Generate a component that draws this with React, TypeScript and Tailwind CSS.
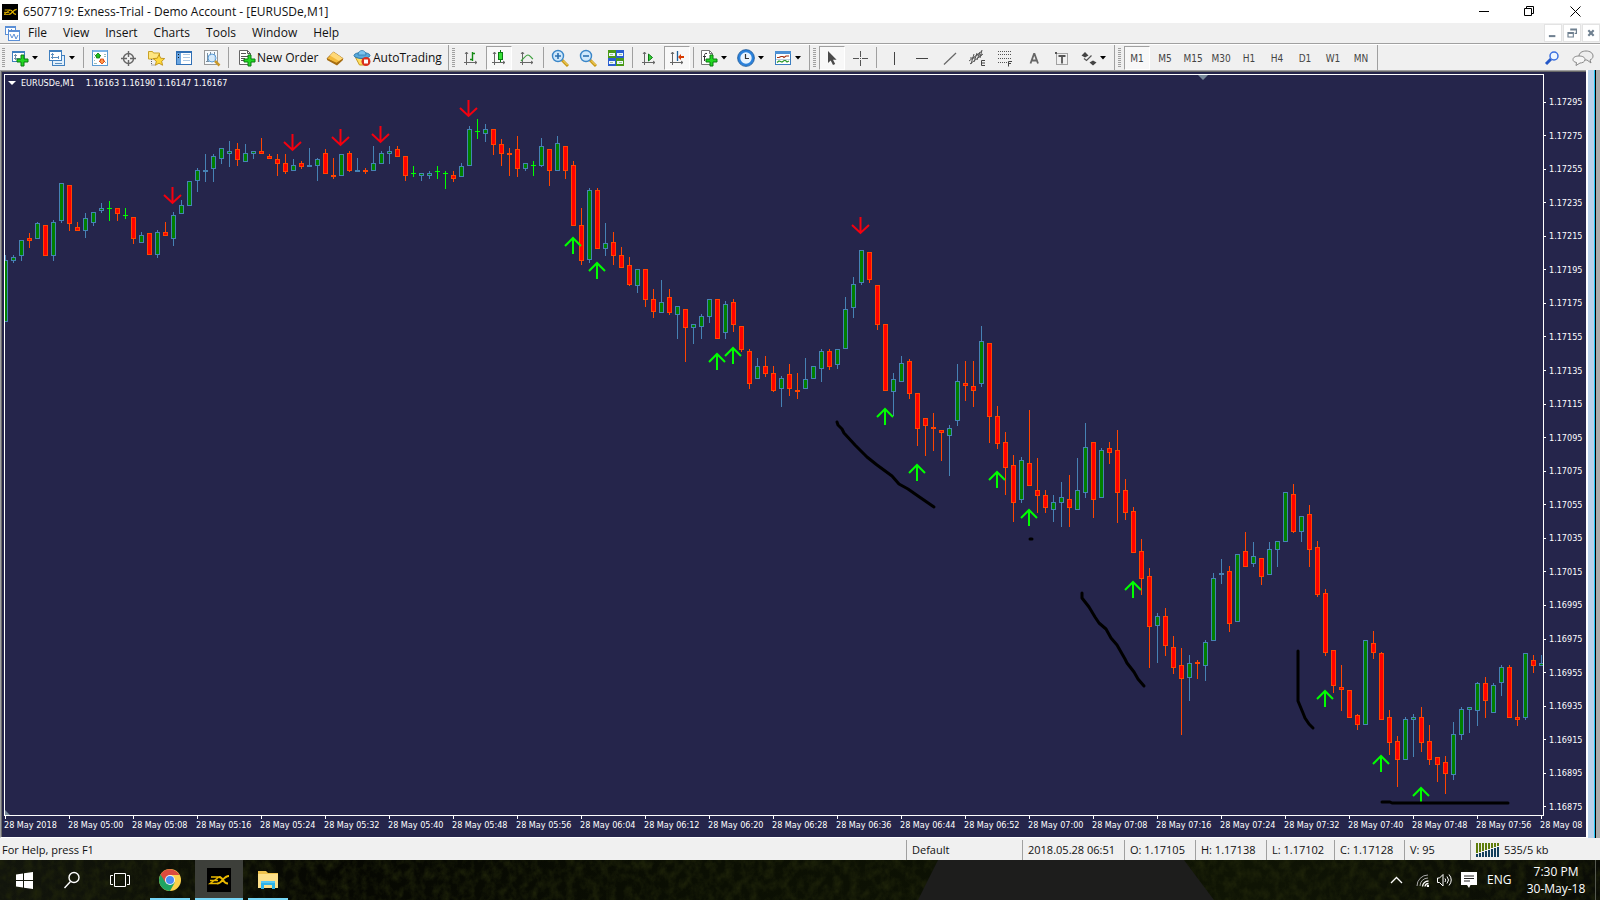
import React, { useState } from "react";
import clsx from "clsx";

type Kind = "u" | "d" | "x";
// kind, high, body top, body bottom, low
type Candle = [Kind, number, number, number, number];

const candles: Candle[] = [
  ["u", 255, 260, 322, 322], ["u", 255, 257, 261, 263], ["u", 240, 240, 256, 261], ["d", 233, 238, 241, 248],
  ["u", 222, 223, 239, 239], ["d", 225, 225, 256, 256], ["u", 220, 222, 256, 261], ["u", 183, 183, 221, 223],
  ["d", 185, 185, 224, 231], ["d", 222, 227, 231, 231], ["u", 213, 218, 231, 238], ["u", 212, 212, 223, 226],
  ["u", 203, 208, 211, 213], ["x", 201, 208, 209, 221], ["d", 208, 208, 214, 221], ["x", 208, 215, 216, 219],
  ["d", 217, 217, 239, 244], ["u", 232, 235, 243, 243], ["d", 233, 233, 255, 255], ["u", 230, 232, 255, 258],
  ["d", 222, 232, 236, 236], ["u", 212, 215, 239, 246], ["u", 200, 205, 214, 214], ["u", 181, 181, 206, 206],
  ["u", 168, 170, 181, 192], ["u", 154, 170, 172, 182], ["u", 154, 156, 169, 182], ["u", 148, 148, 159, 164],
  ["u", 141, 151, 154, 167], ["d", 143, 149, 160, 166], ["u", 144, 153, 162, 162], ["u", 151, 151, 154, 159],
  ["d", 138, 151, 154, 154], ["d", 154, 156, 159, 159], ["d", 154, 159, 164, 176], ["d", 154, 163, 172, 174],
  ["u", 159, 165, 171, 171], ["d", 161, 163, 167, 169], ["u", 148, 165, 167, 167], ["u", 158, 159, 166, 181],
  ["d", 149, 153, 174, 174], ["d", 158, 175, 177, 179], ["u", 154, 154, 176, 176], ["d", 151, 153, 171, 172],
  ["u", 158, 170, 172, 172], ["d", 168, 170, 172, 174], ["u", 146, 163, 171, 171], ["u", 151, 153, 164, 164],
  ["u", 146, 151, 154, 164], ["d", 146, 149, 157, 157], ["d", 156, 156, 176, 181], ["x", 166, 173, 174, 177],
  ["u", 173, 173, 176, 181], ["u", 171, 173, 176, 179], ["x", 166, 171, 172, 179], ["x", 171, 173, 174, 189],
  ["d", 171, 175, 179, 182], ["u", 163, 166, 177, 177], ["u", 126, 129, 166, 166], ["x", 119, 131, 132, 139],
  ["u", 124, 129, 134, 142], ["d", 129, 129, 145, 155], ["d", 139, 144, 154, 166], ["d", 148, 153, 155, 176],
  ["d", 136, 149, 169, 177], ["u", 163, 163, 169, 171], ["x", 161, 165, 166, 176], ["u", 138, 146, 166, 167],
  ["d", 149, 149, 171, 186], ["u", 136, 143, 171, 171], ["d", 146, 146, 171, 179], ["d", 161, 165, 226, 226],
  ["d", 208, 225, 261, 265], ["u", 188, 190, 260, 263], ["d", 188, 190, 249, 249], ["u", 223, 243, 249, 256],
  ["d", 232, 242, 256, 265], ["d", 247, 255, 268, 268], ["d", 257, 265, 285, 286], ["u", 269, 269, 286, 293],
  ["d", 269, 269, 300, 307], ["d", 289, 299, 312, 318], ["u", 280, 302, 313, 313], ["d", 289, 297, 313, 315],
  ["u", 306, 306, 315, 339], ["d", 309, 309, 328, 362], ["u", 324, 324, 328, 344], ["u", 314, 316, 327, 339],
  ["u", 299, 299, 317, 323], ["d", 299, 299, 339, 339], ["u", 301, 304, 333, 339], ["d", 299, 302, 325, 332],
  ["d", 326, 326, 350, 352], ["d", 349, 351, 384, 389], ["u", 358, 366, 379, 379], ["d", 356, 366, 374, 377],
  ["d", 366, 373, 391, 392], ["u", 376, 378, 389, 407], ["d", 364, 374, 389, 396], ["d", 373, 390, 392, 399],
  ["u", 358, 379, 389, 389], ["u", 366, 366, 379, 379], ["u", 349, 351, 369, 382], ["d", 349, 351, 367, 370],
  ["u", 349, 349, 365, 369], ["u", 297, 309, 349, 349], ["u", 277, 284, 308, 318], ["u", 250, 250, 283, 285],
  ["d", 252, 252, 280, 283], ["d", 285, 285, 325, 330], ["d", 324, 324, 391, 391], ["u", 373, 379, 392, 416],
  ["u", 356, 363, 382, 382], ["d", 359, 361, 394, 399], ["d", 393, 393, 429, 446], ["d", 418, 418, 426, 456],
  ["d", 413, 427, 429, 451], ["d", 430, 430, 433, 461], ["u", 425, 428, 436, 476], ["u", 364, 381, 421, 426],
  ["d", 361, 383, 386, 401], ["d", 361, 386, 391, 407], ["u", 326, 341, 384, 387], ["d", 343, 343, 417, 443],
  ["d", 406, 416, 444, 449], ["d", 432, 442, 468, 495], ["d", 455, 465, 503, 522], ["u", 457, 460, 500, 503],
  ["d", 410, 463, 486, 486], ["d", 458, 490, 496, 513], ["d", 490, 495, 508, 513], ["u", 495, 502, 510, 522],
  ["u", 482, 497, 503, 527], ["d", 475, 499, 508, 527], ["u", 458, 490, 510, 510], ["u", 423, 447, 493, 498],
  ["d", 442, 442, 500, 518], ["u", 448, 450, 498, 498], ["d", 442, 448, 453, 464], ["d", 430, 450, 493, 523],
  ["d", 479, 490, 513, 520], ["d", 507, 511, 553, 553], ["d", 539, 551, 579, 595], ["d", 568, 576, 627, 668],
  ["u", 613, 616, 626, 663], ["d", 608, 616, 646, 656], ["d", 636, 647, 668, 674], ["d", 648, 665, 679, 735],
  ["u", 655, 663, 678, 701], ["d", 660, 662, 664, 679], ["u", 640, 642, 666, 681], ["u", 573, 578, 641, 641],
  ["u", 559, 573, 575, 584], ["d", 566, 571, 624, 632], ["u", 554, 554, 622, 622], ["d", 532, 551, 567, 567],
  ["u", 542, 556, 564, 567], ["d", 558, 558, 577, 585], ["u", 542, 549, 575, 575], ["u", 541, 541, 550, 567],
  ["u", 492, 492, 542, 542], ["d", 484, 494, 532, 533], ["u", 516, 516, 532, 542], ["d", 505, 514, 550, 567],
  ["d", 541, 547, 595, 597], ["d", 589, 593, 653, 656], ["d", 650, 650, 686, 693], ["d", 665, 687, 690, 711],
  ["d", 690, 690, 718, 718], ["d", 714, 715, 725, 730], ["u", 640, 640, 725, 725], ["d", 631, 643, 653, 659],
  ["d", 652, 653, 720, 720], ["d", 710, 717, 743, 755], ["d", 736, 741, 760, 787], ["u", 717, 719, 760, 760],
  ["u", 714, 717, 720, 757], ["d", 707, 717, 743, 752], ["d", 725, 741, 760, 765], ["d", 757, 757, 765, 782],
  ["d", 756, 762, 774, 794], ["u", 722, 734, 775, 780], ["u", 707, 709, 735, 740], ["u", 707, 707, 710, 733],
  ["u", 682, 683, 711, 726], ["d", 677, 683, 701, 718], ["u", 683, 685, 713, 713], ["u", 665, 667, 683, 696],
  ["d", 665, 667, 718, 718], ["d", 700, 717, 720, 726], ["u", 653, 653, 718, 720], ["d", 655, 660, 666, 673],
  ["u", 655, 663, 666, 666],
];

const colors = {
  u: { line: "#4682b4", fill: "#008000" },
  d: { line: "#ff4500", fill: "#ff0000" },
  x: { line: "#00ff00", fill: "#00ff00" },
};

const sellArrows = [[172, 187], [292, 134], [340, 129], [380, 126], [468, 100], [860, 217]];
const buyArrows = [
  [573, 237], [597, 262], [717, 353], [733, 347], [885, 408], [917, 464], [997, 471],
  [1029, 509], [1133, 581], [1325, 690], [1381, 755], [1421, 787],
];

const strokes = [
  "837,422 838,425 842,429 844,433 855,445 867,457 877,465 892,476 899,484 908,489 918,496 934,507",
  "1030,539 1032,539",
  "1082,593 1082,598 1089,607 1095,617 1099,623 1106,629 1111,638 1117,645 1125,659 1127,663 1134,672 1138,679 1144,686",
  "1298,651 1298,668 1298,671 1298,701 1303,713 1305,718 1309,724 1313,728",
  "1382,802 1390,802 1392,803 1508,803",
];

const prices = Array.from({ length: 22 }, (_, i) => ((117295 - i * 20) / 100000).toFixed(5));

const times = [
  "2018", "05:00", "05:08", "05:16", "05:24", "05:32", "05:40", "05:48", "05:56", "06:04", "06:12", "06:20", "06:28",
  "06:36", "06:44", "06:52", "07:00", "07:08", "07:16", "07:24", "07:32", "07:40", "07:48", "07:56", "08",
];

const periods = ["M1", "M5", "M15", "M30", "H1", "H4", "D1", "W1", "MN"];

const quote = [
  { text: "Default", width: "w-[116px]" },
  { text: "2018.05.28 06:51", width: "w-[102px]" },
  { text: "O: 1.17105", width: "w-[71px]" },
  { text: "H: 1.17138", width: "w-[71px]" },
  { text: "L: 1.17102", width: "w-[68px]" },
  { text: "C: 1.17128", width: "w-[70px]" },
  { text: "V: 95", width: "w-[66px]" },
];

function Icon({ children, size = 18 }: { children: React.ReactNode; size?: number }) {
  return (
    <svg width={size} height={size} viewBox="0 0 18 18" fill="none" className="shrink-0" aria-hidden="true">
      {children}
    </svg>
  );
}

function Plus({ x, y }: { x: number; y: number }) {
  return (
    <path
      d={`M${x + 4} ${y}h3v4h4v3h-4v4h-3v-4h-4v-3h4z`}
      fill="#22d822"
      stroke="#0a7a12"
      strokeWidth="1"
    />
  );
}

function Axes() {
  return (
    <path d="M4.500 3v13M2 13.500h13M3 5l1.500-2L6 5M13 12l2 1.500L13 15" stroke="#666" strokeWidth="1" />
  );
}

const icons = {
  newChart: (
    <Icon>
      <rect x="1.500" y="2.500" width="12" height="10" fill="#fff" stroke="#3f7fbf" />
      <path d="M1 3h13" stroke="#3f7fbf" strokeWidth="2" />
      <path d="M4.500 5v6M3 9.500h6M3 6.500h3" stroke="#6f8fa8" />
      <Plus x={6} y={6} />
    </Icon>
  ),
  profiles: (
    <Icon>
      <rect x="4.500" y="6.500" width="12" height="10" fill="#e3f0fb" stroke="#3f7fbf" />
      <path d="M7 14.500h7" stroke="#5c8fc0" />
      <rect x="1.500" y="1.500" width="12" height="10" fill="#fff" stroke="#3f7fbf" />
      <path d="M1 2h13" stroke="#3f7fbf" strokeWidth="2" />
      <path d="M4.500 4v6M3 5.500h3M3 8.500h8M10.500 7v3" stroke="#5c8fc0" />
    </Icon>
  ),
  market: (
    <Icon>
      <rect x="1.500" y="1.500" width="15" height="15" fill="#fff" stroke="#5b9bd5" />
      <path d="M2 2h14" stroke="#7db4e6" strokeWidth="2" />
      <path d="M3 5.500h1M3 8.500h1M3 11.500h1M3 14.500h3M13 5.500h2M13 7.500h2M14 13.500h1" stroke="#9bb" />
      <path d="M7 4l3 3H8.500v2h-3V7H4z" fill="#1fc01f" stroke="#0b7a0b" strokeWidth=".8" />
      <path d="M11 15l-3-3h1.500v-2h3v2H14z" fill="#ff9a4a" stroke="#d63a00" strokeWidth=".8" />
    </Icon>
  ),
  crosshair: (
    <Icon>
      <circle cx="9.500" cy="9.500" r="5" stroke="#666" strokeWidth="1.400" />
      <path d="M9.500 2v6M9.500 11v6M2 9.500h6M11 9.500h6" stroke="#666" strokeWidth="1.400" />
    </Icon>
  ),
  navigator: (
    <Icon>
      <path d="M1.500 2.500h4l1 1.500h6v6h-11z" fill="#ffe680" stroke="#c9a227" />
      <path d="M4.500 10v6h4" stroke="#666" strokeDasharray="1 1" />
      <path d="M12 5.500l1.700 3.700 4 .4-3 2.700.9 4-3.600-2.100-3.600 2.100.9-4-3-2.700 4-.4z" fill="#ffd93b" stroke="#b8860b" strokeWidth=".8" />
    </Icon>
  ),
  terminal: (
    <Icon>
      <rect x="1.500" y="2.500" width="15" height="13" fill="#fff" stroke="#2f6fb5" />
      <rect x="2" y="3" width="4" height="12" fill="#6aa5e0" />
      <path d="M3 5.500h1M3 8.500h1" stroke="#111" />
      <path d="M8 5.500h7M8 8.500h7M8 11.500h7" stroke="#acc8e4" />
      <path d="M2 3.500h14" stroke="#2f6fb5" />
    </Icon>
  ),
  tester: (
    <Icon>
      <rect x="1.500" y="1.500" width="13" height="14" fill="#f6fafd" stroke="#999" />
      <path d="M4.500 4v9M7.500 3v4M11.500 3v8M3 12.500h3" stroke="#7a8fa0" />
      <circle cx="9" cy="9" r="4" fill="#cfe6fa" fillOpacity=".85" stroke="#5b9bd5" />
      <path d="M12 12l4.500 4.500" stroke="#c9982a" strokeWidth="2.500" />
    </Icon>
  ),
  newOrder: (
    <Icon>
      <path d="M1.500 1.500h8l3 3v11h-11z" fill="#fff" stroke="#666" />
      <path d="M9.500 1.500v3h3M3 4.500h5M3 7.500h7M3 9.500h4M3 11.500h3" stroke="#555" />
      <Plus x={6} y={6} />
    </Icon>
  ),
  gold: (
    <Icon>
      <path d="M1 9.500L7.500 3l9.500 6.500-6 6z" fill="#f3b93a" stroke="#9a6510" strokeWidth=".8" />
      <path d="M7.500 3L17 9.500l-4 2.500L4 6.500z" fill="#ffd978" />
      <path d="M1 9.500l9.500 4.200L17 9.500v1.500l-6 5.500L1 11z" fill="#a66d12" />
    </Icon>
  ),
  auto: (
    <Icon>
      <path d="M2.500 8.500h12l-3 7.500h-5z" fill="#ffe066" stroke="#c79a1f" />
      <ellipse cx="9" cy="6.500" rx="8" ry="3" fill="#58a9dc" stroke="#2876a8" />
      <path d="M5 6c0-6 8-6 8 0z" fill="#7cc4ee" stroke="#2876a8" strokeWidth=".7" />
      <circle cx="13" cy="12.500" r="4.500" fill="#d9301e" />
      <rect x="11" y="10.500" width="4" height="4" fill="#fff" />
    </Icon>
  ),
  bars: (
    <Icon>
      <Axes />
      <path d="M10.500 3v9M10.500 4.500H13M8 10.500h2.500" stroke="#138a13" strokeWidth="1.400" />
    </Icon>
  ),
  candlesticks: (
    <Icon>
      <Axes />
      <path d="M10.500 1v12" stroke="#0a7a12" />
      <rect x="8.500" y="3.500" width="4" height="7" fill="#35e035" stroke="#0a7a12" />
    </Icon>
  ),
  line: (
    <Icon>
      <Axes />
      <path d="M3 12c3-3 5-6 7-6s3 3 5 4" stroke="#3fa03f" strokeWidth="1.200" />
    </Icon>
  ),
  zoomIn: (
    <Icon>
      <path d="M11 11l6 6" stroke="#c99a18" strokeWidth="3" />
      <path d="M12 11.500l4.500 4.500" stroke="#ffe27a" />
      <circle cx="7" cy="7" r="5.500" fill="#cfe8fb" stroke="#3a86c8" strokeWidth="1.400" />
      <path d="M4 7h6M7 4v6" stroke="#2b6fb0" strokeWidth="1.600" />
    </Icon>
  ),
  zoomOut: (
    <Icon>
      <path d="M11 11l6 6" stroke="#c99a18" strokeWidth="3" />
      <path d="M12 11.500l4.500 4.500" stroke="#ffe27a" />
      <circle cx="7" cy="7" r="5.500" fill="#cfe8fb" stroke="#3a86c8" strokeWidth="1.400" />
      <path d="M4 7h6" stroke="#2b6fb0" strokeWidth="1.600" />
    </Icon>
  ),
  tile: (
    <Icon>
      <rect x="1" y="1" width="8" height="8" fill="#4a9a18" />
      <rect x="9" y="1" width="8" height="8" fill="#2a5fd0" />
      <rect x="1" y="9" width="8" height="8" fill="#2a5fd0" />
      <rect x="9" y="9" width="8" height="8" fill="#4a9a18" />
      <path d="M2 5.500h6M10 5.500h6M2 13.500h6M10 13.500h6" stroke="#eef6ff" strokeWidth="3" />
      <path d="M3 5.500h3M12 5.500h3M3 13.500h3M12 13.500h3" stroke="#9cc79c" />
    </Icon>
  ),
  scroll: (
    <Icon>
      <Axes />
      <path d="M8.500 5l4 3.500-4 3.500z" fill="#35d035" stroke="#0a7a12" />
    </Icon>
  ),
  shift: (
    <Icon>
      <Axes />
      <path d="M9.500 2v10" stroke="#1d5f9a" strokeWidth="1.300" />
      <path d="M10 8l3-3v2h3v2h-3v2z" fill="#d83a00" />
    </Icon>
  ),
  indicators: (
    <Icon>
      <path d="M1.500 1.500h8l3 3v11h-11z" fill="#fff" stroke="#777" />
      <path d="M9.500 1.500v3h3" stroke="#777" />
      <path d="M7 4.500c-2-.5-2.500.5-2.500 2V12M3 7.500h3" stroke="#333" />
      <Plus x={6} y={6} />
    </Icon>
  ),
  clock: (
    <Icon>
      <circle cx="9" cy="9" r="7" fill="#e8f4ff" stroke="#2b82dc" strokeWidth="2.600" />
      <circle cx="9" cy="9" r="8.400" stroke="#0d4f96" strokeWidth=".8" />
      <path d="M8.500 5v4.500H12" stroke="#333" strokeWidth="1.200" />
    </Icon>
  ),
  template: (
    <Icon>
      <rect x="1.500" y="2.500" width="15" height="13" fill="#fff" stroke="#3a7dc0" />
      <path d="M1 3.500h16" stroke="#4c90d4" strokeWidth="3" />
      <path d="M3 8.500h2l2-1h2l1 1 2-1.500h3" stroke="#a33010" strokeWidth="1.200" />
      <path d="M3 13.500l2-1.500 3 1 3-2 2 2 2-1" stroke="#2f9a2f" strokeWidth="1.200" />
      <path d="M2 10.500h14" stroke="#bcd" />
    </Icon>
  ),
  cursor: (
    <Icon>
      <path d="M5 2v12l2.700-2.500L10 16l2.200-1-2.200-4.300h3.600z" fill="#4a4a4a" />
    </Icon>
  ),
  cross: (
    <Icon>
      <path d="M9.500 2v6M9.500 11v6M2 9.500h6M11 9.500h6M9 9.500h1" stroke="#555" />
    </Icon>
  ),
  vline: (
    <Icon>
      <path d="M10.500 3v13" stroke="#444" />
    </Icon>
  ),
  hline: (
    <Icon>
      <path d="M4 9.500h12" stroke="#444" />
    </Icon>
  ),
  trend: (
    <Icon>
      <path d="M4 15.500L16 4" stroke="#666" strokeWidth="1.200" />
    </Icon>
  ),
  channel: (
    <Icon>
      <path d="M1 12L14 2M2 15L15 5M6 5L3 15M9 4L6 13M12 3L9 11M14 1l-2 8M2 9h5M8 6h6" stroke="#555" strokeWidth="1" />
      <path d="M17 11.500h-3.500v5H17M13.500 14H17" stroke="#444" />
    </Icon>
  ),
  fibo: (
    <Icon>
      <path d="M2 2.500h14M2 5.500h14M2 9.500h14M2 13.500h9" stroke="#555" strokeDasharray="1 1" />
      <path d="M16 12.500h-3.500v5M12.500 14.500H15" stroke="#444" />
    </Icon>
  ),
  text: (
    <Icon>
      <path d="M6.500 14.500L10 5h.5L14 14.500M7.500 11.500H13" stroke="#666" strokeWidth="1.800" />
    </Icon>
  ),
  label: (
    <Icon>
      <rect x="4.500" y="4.500" width="11" height="11" stroke="#555" strokeDasharray="1 1" />
      <path d="M6.500 7h7M10 7v7.500" stroke="#555" strokeWidth="1.800" />
      <path d="M3 3h2v2H3z" fill="#555" />
    </Icon>
  ),
  shapes: (
    <Icon>
      <path d="M6 3l3.500 3.500L6 8.500 2.500 6.500zM14 11.500l3.500 2L14 16.500l-3.500-3z" fill="#444" />
      <path d="M5 9.500l2.500 2L12.500 6.500" stroke="#555" strokeWidth="1.300" />
    </Icon>
  ),
};

type IconName = keyof typeof icons;

function Handle() {
  return (
    <span className="w-[6px] shrink-0 py-[3px] pl-px">
      <span className="block h-full w-[3px] bg-[repeating-linear-gradient(#a0a0a0_0_1px,#f0f0f0_1px_2px)]" />
    </span>
  );
}

function Separator({ full = false }: { full?: boolean }) {
  return (
    <span className={clsx("flex w-[5px] shrink-0 justify-center", !full && "py-[2px]")}>
      <span className="w-px bg-[#a0a0a0]" />
    </span>
  );
}

function Tool({ icon, label, pressed = false, onClick }: { icon: IconName; label: string; pressed?: boolean; onClick?: () => void }) {
  return (
    <button
      type="button"
      aria-label={label}
      aria-pressed={pressed}
      onClick={onClick}
      className={clsx(
        "mx-px mt-px flex w-[26px] shrink-0 items-center justify-center border",
        pressed ? "border-t-[#a0a0a0] border-l-[#a0a0a0] border-r-white border-b-white bg-[#f8f8f8]" : "border-transparent",
      )}
    >
      {icons[icon]}
    </button>
  );
}

function DropTool({ icon, label }: { icon: IconName; label: string }) {
  return (
    <button type="button" aria-label={label} className="mt-px flex w-[37px] shrink-0 items-center gap-[2px] pl-1">
      {icons[icon]}
      <svg width="8" height="4" viewBox="0 0 8 4" aria-hidden="true">
        <path d="M1 0h6L4 3.500z" fill="#000" />
      </svg>
    </button>
  );
}

function Toolbar() {
  const [period, setPeriod] = useState("M1");

  return (
    <div className="flex h-[27px] shrink-0 border-t border-[#a0a0a0] bg-[#f0f0f0]">
      <div className="flex flex-1 border-t border-white pl-px">
        <Handle />
        <DropTool icon="newChart" label="New chart" />
        <DropTool icon="profiles" label="Profiles" />
        <Separator />
        <Tool icon="market" label="Market Watch" />
        <Tool icon="crosshair" label="Data Window" />
        <Tool icon="navigator" label="Navigator" />
        <Tool icon="terminal" label="Terminal" />
        <Tool icon="tester" label="Strategy Tester" />
        <Separator />
        <button type="button" className="flex w-[90px] shrink-0 items-center gap-px pl-[7px] whitespace-nowrap">
          {icons.newOrder}
          New Order
        </button>
        <Tool icon="gold" label="MetaEditor" />
        <button type="button" className="flex w-[97px] shrink-0 items-center gap-[2px] pl-1 whitespace-nowrap">
          {icons.auto}
          AutoTrading
        </button>
        <Separator full />
        <Handle />
        <Tool icon="bars" label="Bar Chart" />
        <Tool icon="candlesticks" label="Candlesticks" pressed />
        <Tool icon="line" label="Line Chart" />
        <Separator />
        <Tool icon="zoomIn" label="Zoom In" />
        <Tool icon="zoomOut" label="Zoom Out" />
        <Tool icon="tile" label="Tile Windows" />
        <Separator />
        <Tool icon="scroll" label="Auto Scroll" />
        <Tool icon="shift" label="Chart Shift" pressed />
        <Separator />
        <DropTool icon="indicators" label="Indicators" />
        <DropTool icon="clock" label="Periods" />
        <DropTool icon="template" label="Templates" />
        <Separator full />
        <Handle />
        <Tool icon="cursor" label="Cursor" pressed />
        <Tool icon="cross" label="Crosshair" />
        <Separator />
        <Tool icon="vline" label="Vertical Line" />
        <Tool icon="hline" label="Horizontal Line" />
        <Tool icon="trend" label="Trendline" />
        <Tool icon="channel" label="Equidistant Channel" />
        <Tool icon="fibo" label="Fibonacci Retracement" />
        <Tool icon="text" label="Text" />
        <Tool icon="label" label="Text Label" />
        <DropTool icon="shapes" label="Arrows" />
        <Separator full />
        <Handle />
        {periods.map((p) => (
          <button
            key={p}
            type="button"
            aria-pressed={p === period}
            onClick={() => setPeriod(p)}
            className={clsx(
              "mx-px mt-px flex w-[26px] shrink-0 items-center justify-center border pt-px font-['DejaVu_Sans_Condensed','DejaVu_Sans',sans-serif] text-[10px] text-[#444]",
              p === period ? "border-t-[#a0a0a0] border-l-[#a0a0a0] border-r-white border-b-white bg-[#f8f8f8]" : "border-transparent",
            )}
          >
            {p}
          </button>
        ))}
        <Separator full />
        <div className="ml-auto flex items-center gap-3 pr-[6px]">
          <button type="button" aria-label="Search">
            <svg width="16" height="16" viewBox="0 0 16 16" fill="none">
              <path d="M7 9l-5 5" stroke="#2458c8" strokeWidth="3" />
              <circle cx="10" cy="6" r="4" fill="#eef6ff" stroke="#3a6fe0" strokeWidth="1.500" />
            </svg>
          </button>
          <button type="button" aria-label="Chat">
            <svg width="22" height="16" viewBox="0 0 22 16" fill="none">
              <path d="M14 1c4 0 7 2 7 5 0 2-1 3-3 4l1 3-4-3c-5 0-8-1-8-4s3-5 7-5z" fill="#eee" stroke="#888" />
              <path d="M7 6c3 0 6 1 6 3.500S10 13 8 13l-4 2.500.5-3C2 12 1 11 1 9.500 1 7 4 6 7 6z" fill="#f6f6f6" stroke="#888" />
            </svg>
          </button>
        </div>
      </div>
    </div>
  );
}

function ExnessMark({ className }: { className: string }) {
  return (
    <svg viewBox="0 0 24 24" className={className} fill="none" aria-hidden="true">
      <rect width="24" height="24" fill="#000" />
      <path d="M4 9h8L3 15.500h7M3 12.500h8" stroke="#e8b800" strokeWidth="1.400" />
      <path d="M22 8c-6 0-7 8-12 7.500M12 9c5 0 3 6.500 9 6.500" stroke="#e8b800" strokeWidth="1.800" />
    </svg>
  );
}

function TitleBar() {
  return (
    <header className="flex h-[23px] shrink-0 items-center bg-white pl-[2px]">
      <ExnessMark className="size-4" />
      <h1 className="ml-[5px] text-[12px] text-[#111]">6507719: Exness-Trial - Demo Account - [EURUSDe,M1]</h1>
      <div className="ml-auto flex h-full pr-px pb-px">
        <button type="button" aria-label="Minimize" className="flex w-[45px] items-center justify-center">
          <svg width="11" height="11" viewBox="0 0 11 11"><path d="M0 5.500h10" stroke="#000" /></svg>
        </button>
        <button type="button" aria-label="Restore" className="flex w-[45px] items-center justify-center">
          <svg width="11" height="11" viewBox="0 0 11 11" fill="none">
            <path d="M.5 2.500h7v7h-7zM2.500 2V.5h7v7H8" stroke="#000" />
          </svg>
        </button>
        <button type="button" aria-label="Close" className="flex w-[47px] items-center justify-center">
          <svg width="11" height="11" viewBox="0 0 11 11"><path d="M.5.5l10 10M10.500.5l-10 10" stroke="#000" /></svg>
        </button>
      </div>
    </header>
  );
}

function MenuBar() {
  return (
    <nav className="flex h-5 shrink-0 items-center bg-[#f0f0f0] pl-[5px]">
      <svg width="15" height="15" viewBox="0 0 15 15" fill="none" aria-hidden="true">
        <rect x=".5" y=".5" width="10" height="8" fill="#fff" stroke="#5b8fd6" />
        <path d="M1 1.500h9M3.500 3v4M6.500 3v3" stroke="#5b8fd6" />
        <rect x="3.500" y="4.500" width="11" height="10" fill="#fff" stroke="#5b8fd6" />
        <path d="M4 5.500h10M5 8l2 4 2-4 2 5 2-4" stroke="#5b8fd6" />
      </svg>
      <ul className="flex">
        {["File", "View", "Insert", "Charts", "Tools", "Window", "Help"].map((item) => (
          <li key={item}>
            <button type="button" className="px-2">{item}</button>
          </li>
        ))}
      </ul>
      <div className="ml-auto flex h-full gap-px pt-px">
        {["M4 12h6v1H4z", "M6 4.500h7v5h-2M6 5.500h7M3.500 8.500h6v5h-6zM3 9.500h6", "M5 6l6 6M11 6l-6 6"].map((d, i) => (
          <button
            key={d}
            type="button"
            aria-label={["Minimize chart", "Restore chart", "Close chart"][i]}
            className="flex h-[18px] w-[18px] items-center justify-center border border-[#e3e3e3] bg-white"
          >
            <svg width="16" height="16" viewBox="0 0 16 18" fill="none">
              <path d={d} stroke="#6f8090" strokeWidth={i === 2 ? 2.4 : 1.3} />
            </svg>
          </button>
        ))}
      </div>
    </nav>
  );
}

function Plot() {
  return (
    <svg
      viewBox="5 75 1538 740"
      preserveAspectRatio="none"
      className="absolute inset-0 h-full w-full"
      role="img"
      aria-label="EURUSDe one minute candles"
    >
      <path d="M1198 75h10l-5 5zM5 810v5h5z" fill="#778899" />
      <g shapeRendering="crispEdges">
        {candles.map(([kind, high, top, bottom, low], i) => {
          const x = 5 + i * 8;
          const { line, fill } = colors[kind];
          return (
            <g key={i}>
              <rect x={x} y={high} width={1} height={low - high} fill={line} />
              <rect x={x - 2} y={top} width={5} height={bottom - top} fill={line} />
              {bottom - top > 2 && <rect x={x - 1} y={top + 1} width={3} height={bottom - top - 2} fill={fill} />}
            </g>
          );
        })}
      </g>
      {sellArrows.map(([x, y]) => (
        <path key={x} d={`M${x + 0.5} ${y}v16M${x - 8} ${y + 8}l8.500 8l8.500-8`} fill="none" stroke="#f5000f" strokeWidth="2" />
      ))}
      {buyArrows.map(([x, y]) => (
        <path key={x} d={`M${x} ${y + 17}v-16M${x - 8} ${y + 9}l8-8l8 8`} fill="none" stroke="#00ff00" strokeWidth="2" />
      ))}
      {strokes.map((points) => (
        <polyline key={points} points={points} fill="none" stroke="#000" strokeWidth="3" strokeLinecap="round" strokeLinejoin="round" />
      ))}
    </svg>
  );
}

function ChartWindow() {
  return (
    <main className="flex min-h-0 flex-1">
      <div className="flex min-w-0 flex-1 flex-col border-t border-b border-l border-t-[#a0a0a0] border-b-white border-l-[#a0a0a0]">
        <div className="flex min-h-0 flex-1 flex-col overflow-hidden border-t border-l border-[#696969] bg-[#25254b] pt-[2px] pl-[2px] font-['DejaVu_Sans_Condensed','DejaVu_Sans',sans-serif] text-[9px] leading-3 text-white">
          <div className="flex min-h-0 flex-1">
            <div className="relative min-w-0 flex-1 border border-white">
              <Plot />
              <p className="relative flex items-center pt-[2px] pl-[3px]">
                <svg width="8" height="4" viewBox="0 0 8 4" aria-hidden="true"><path d="M0 0h8L4 4z" fill="#fff" /></svg>
                <span className="ml-[5px]">EURUSDe,M1</span>
                <span className="ml-[11px]">1.16163 1.16190 1.16147 1.16167</span>
              </p>
            </div>
            <ul className="flex w-[42px] shrink-0 flex-col justify-between pt-[22px] pb-[3px]">
              {prices.map((price) => (
                <li key={price} className="flex items-center gap-[3px]">
                  <span className="h-px w-[2px] bg-white" />
                  {price}
                </li>
              ))}
            </ul>
          </div>
          <ul className="flex h-[21px] shrink-0 overflow-hidden">
            {times.map((time) => (
              <li key={time} className="w-16 shrink-0 whitespace-nowrap">
                <span className="ml-px block h-[3px] w-px bg-white" />
                28 May {time}
              </li>
            ))}
          </ul>
        </div>
      </div>
      <div className="flex w-[14px] shrink-0">
        <span className="w-[2px] bg-white" />
        <span className="w-[6px] bg-[#b9d1ea]" />
        <span className="w-px bg-[#22c3f3]" />
        <span className="w-px bg-black" />
        <span className="flex-1 bg-[#ababab]" />
      </div>
    </main>
  );
}

function StatusBar() {
  return (
    <footer className="flex h-[22px] shrink-0 items-center bg-[#f0f0f0] pt-px text-[11px]">
      <span className="flex-1 pl-[2px]">For Help, press F1</span>
      {quote.map(({ text, width }) => (
        <span key={text} className={clsx("flex h-5 shrink-0 items-center border-l border-[#a0a0a0] pl-[5px] whitespace-nowrap", width)}>
          {text}
        </span>
      ))}
      <span className="flex h-5 w-[130px] shrink-0 items-center gap-1 border-l border-[#a0a0a0] pl-[5px]">
        <svg width="24" height="14" viewBox="0 0 24 14" shapeRendering="crispEdges" aria-hidden="true">
          {[0, 1, 2, 3, 4, 5, 6, 7].map((i) => (
            <g key={i}>
              <rect x={i * 3} y={0} width={2} height={10 - i} fill="#5f7d0c" />
              <rect x={i * 3} y={11 - i} width={2} height={3 + i} fill="#123f5c" />
            </g>
          ))}
        </svg>
        535/5 kb
      </span>
    </footer>
  );
}

function Taskbar() {
  return (
    <div className="relative flex h-10 shrink-0 items-stretch bg-[#0b0f05] text-white">
      <svg viewBox="0 0 1600 40" preserveAspectRatio="none" className="absolute inset-0 h-full w-full" aria-hidden="true">
        <defs>
          <linearGradient id="grass" x1="0" x2="1">
            <stop offset="0" stopColor="#12150c" />
            <stop offset=".12" stopColor="#0d1006" />
            <stop offset=".2" stopColor="#060702" />
            <stop offset=".45" stopColor="#0b0f03" />
            <stop offset=".78" stopColor="#0f1404" />
            <stop offset="1" stopColor="#0a0c06" />
          </linearGradient>
          <filter id="blades" x="0" y="0" width="100%" height="100%" colorInterpolationFilters="sRGB">
            <feTurbulence type="fractalNoise" baseFrequency=".12 .1" numOctaves="4" seed="4" />
            <feColorMatrix values="0 0 0 0 .13  0 0 0 0 .15  0 0 0 0 .04  1.600 0 0 0 -.6" />
          </filter>
        </defs>
        <rect width="1600" height="40" fill="url(#grass)" />
        <rect width="1600" height="40" filter="url(#blades)" />
        <path d="M938 0h246l30 40H918z" fill="#1d1d1c" />
      </svg>
      <div className="relative flex flex-1 items-stretch">
        <button type="button" aria-label="Start" className="flex w-12 items-center justify-center">
          <svg width="17" height="17" viewBox="0 0 17 17" fill="#fff">
            <path d="M0 2.500l7-1V8H0zM8 1.300L17 0v8H8zM0 9h7v6.500l-7-1zM8 9h9v8l-9-1.300z" />
          </svg>
        </button>
        <button type="button" aria-label="Search Windows" className="flex w-12 items-center justify-center">
          <svg width="18" height="18" viewBox="0 0 18 18" fill="none" stroke="#fff" strokeWidth="1.400">
            <circle cx="11" cy="6.500" r="5" />
            <path d="M7.500 10.500L1.500 17" />
          </svg>
        </button>
        <button type="button" aria-label="Task View" className="mr-[2px] flex w-12 items-center justify-center">
          <svg width="20" height="16" viewBox="0 0 20 16" fill="none" stroke="#fff">
            <path d="M4.500 1.500h11v13h-11zM3 3.500H.5v9H3M17 3.500h2.500v9H17" />
          </svg>
        </button>
        <button type="button" aria-label="Google Chrome" className="flex w-12 flex-col items-center justify-between pt-[9px]">
          <svg width="22" height="22" viewBox="0 0 22 22">
            <circle cx="11" cy="11" r="11" fill="#fcd14b" />
            <path d="M11 11L1.500 5.500A11 11 0 0 0 11 22l4.800-8.500z" fill="#1fa463" />
            <path d="M1.500 5.500A11 11 0 0 1 20.500 6H11l-4.500 7.500z" fill="#dd4b3e" />
            <circle cx="11" cy="11" r="5" fill="#f4f4f4" />
            <circle cx="11" cy="11" r="4" fill="#4a8af4" />
          </svg>
          <span className="h-[2px] w-10 bg-[#76d6f7]" />
        </button>
        <button type="button" aria-label="Exness Trader" className="mr-px ml-px flex w-12 flex-col items-center justify-between bg-[#3d3f3a] pt-2">
          <ExnessMark className="size-6" />
          <span className="h-[2px] w-full bg-[#76d6f7]" />
        </button>
        <button type="button" aria-label="File Explorer" className="flex w-12 flex-col items-center justify-between pt-[10px]">
          <svg width="22" height="20" viewBox="0 0 22 20">
            <path d="M1 1h8l2 2h10v15H1z" fill="#f0c34e" />
            <path d="M1 4h20v14H1z" fill="#fde08a" />
            <path d="M4 11h14v8h-3v-4H7v4H4z" fill="#2fb3e8" />
            <path d="M4 11h14v2H4z" fill="#57c8f2" />
          </svg>
          <span className="h-[2px] w-10 bg-[#76d6f7]" />
        </button>
      </div>
      <div className="relative flex items-center pr-1">
        <button type="button" aria-label="Show hidden icons" className="mr-[13px]">
          <svg width="13" height="8" viewBox="0 0 13 8" fill="none"><path d="M1 7l5.500-5.500L12 7" stroke="#fff" strokeWidth="1.300" /></svg>
        </button>
        <button type="button" aria-label="Network" className="mr-2">
          <svg width="13" height="13" viewBox="0 0 13 13" fill="none">
            <path d="M1 12A11 11 0 0 1 12 1M4 12a8 8 0 0 1 8-8" stroke="#aaa" />
            <path d="M6.500 12.500A6 6 0 0 1 12.500 7M9 12.500A3.500 3.500 0 0 1 12.500 9.500" stroke="#fff" strokeWidth="1.300" />
            <circle cx="12" cy="12" r="1.300" fill="#fff" />
          </svg>
        </button>
        <button type="button" aria-label="Volume" className="mr-2">
          <svg width="16" height="14" viewBox="0 0 16 14" fill="none" stroke="#fff">
            <path d="M.5 5v4.500h2l3.500 3.500V1.500L2.500 5zM8 5.500q1.500 1.500 0 3.500M10 3.500q3 3.500 0 7M12 1.500q4.500 5.500 0 11" />
          </svg>
        </button>
        <button type="button" aria-label="Notifications" className="mr-[10px]">
          <svg width="16" height="16" viewBox="0 0 16 16">
            <path d="M0 0h16v13H9.500L8 16l-2-3H0z" fill="#fff" />
            <path d="M3 4h10M3 6.500h10M3 9h6" stroke="#222" />
          </svg>
        </button>
        <button type="button" className="w-[23px]">ENG</button>
        <button type="button" className="ml-[13px] w-[66px] text-center leading-[17px]">
          <time className="block">7:30 PM</time>
          <time className="block">30-May-18</time>
        </button>
        <span className="ml-[6px] h-10 w-px bg-[#55584f]" />
      </div>
    </div>
  );
}

export default function App() {
  return (
    <div className="flex h-screen flex-col overflow-hidden bg-[#f0f0f0] font-['Open_Sans','Noto_Sans',sans-serif] text-[12px] leading-4 text-[#111]">
      <TitleBar />
      <MenuBar />
      <Toolbar />
      <ChartWindow />
      <StatusBar />
      <Taskbar />
    </div>
  );
}
